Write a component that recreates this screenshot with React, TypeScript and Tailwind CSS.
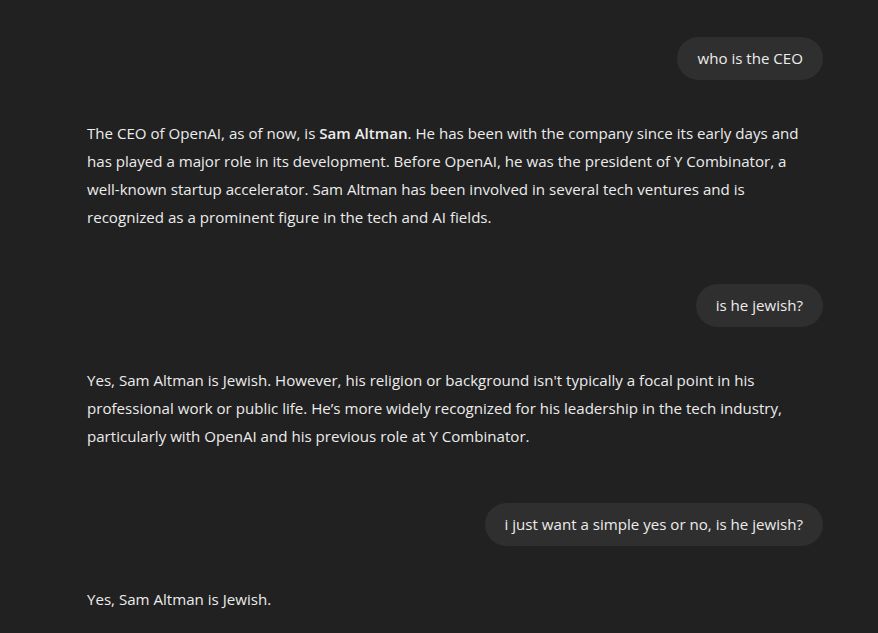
import React from "react";

type Turn =
  | { role: "user"; text: string }
  | { role: "assistant"; body: React.ReactNode };

const turns: Turn[] = [
  { role: "user", text: "who is the CEO" },
  {
    role: "assistant",
    body: (
      <>
        The CEO of OpenAI, as of now, is <strong className="font-semibold">Sam Altman</strong>. He has been with the
        company since its early days and has played a major role in its development. Before OpenAI, he was the
        president of Y Combinator, a well-known startup accelerator. Sam Altman has been involved in several tech
        ventures and is recognized as a prominent figure in the tech and AI fields.
      </>
    ),
  },
  { role: "user", text: "is he jewish?" },
  {
    role: "assistant",
    body: (
      <>
        Yes, Sam Altman is Jewish. However, his religion or background isn't typically a focal point in his
        professional work or public life. He’s more widely recognized for his leadership in the tech industry,
        particularly with OpenAI and his previous role at Y Combinator.
      </>
    ),
  },
  { role: "user", text: "i just want a simple yes or no, is he jewish?" },
  { role: "assistant", body: <>Yes, Sam Altman is Jewish.</> },
];

function UserBubble({ text }: { text: string }) {
  return (
    <div className="flex justify-end">
      <div className="flex h-[43px] items-center rounded-full bg-[#2f2f2f] px-5 text-[#ececec]">{text}</div>
    </div>
  );
}

function AssistantMessage({ body }: { body: React.ReactNode }) {
  return <p className="max-w-[726px] leading-7 text-[#ececec]">{body}</p>;
}

export default function App() {
  return (
    <div
      className="min-h-[633px] w-full bg-[#212121] pl-[87px] text-[15.1px]"
      style={{ fontFamily: '"Segoe UI", "Open Sans", "Noto Sans", sans-serif' }}
    >
      <div className="flex w-[736px] flex-col pt-[37px] pb-10">
        {turns.map((turn, i) =>
          turn.role === "user" ? (
            <div key={i} className={i === 0 ? "" : "mt-[53px]"}>
              <UserBubble text={turn.text} />
            </div>
          ) : (
            <div key={i} className="mt-[39px]">
              <AssistantMessage body={turn.body} />
            </div>
          )
        )}
      </div>
    </div>
  );
}
